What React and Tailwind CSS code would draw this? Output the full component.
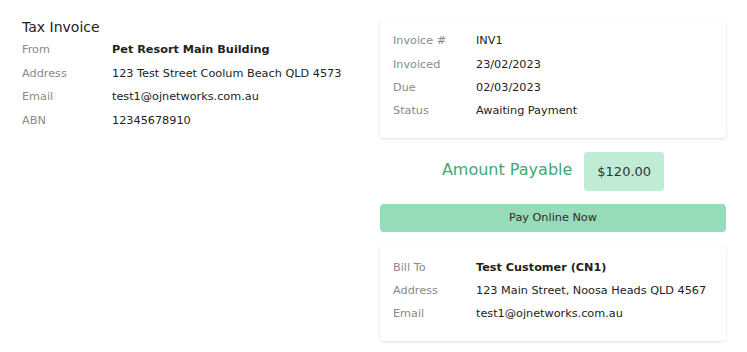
import React from "react";

const font = { fontFamily: '"DejaVu Sans", Verdana, sans-serif' };

function LRow({ label, value, bold }) {
  return (
    <div className="flex h-[23.7px] items-center">
      <div className="w-[90px] shrink-0 text-[#8a8a8a]">{label}</div>
      <div className={`text-[#222] ${bold ? "font-bold" : ""}`}>{value}</div>
    </div>
  );
}

function CRow({ label, value, bold, h = "h-[23.3px]" }) {
  return (
    <div className={`flex ${h} items-center`}>
      <div className="w-[83px] shrink-0 text-[#8a8a8a]">{label}</div>
      <div className={`text-[#222] ${bold ? "font-bold" : ""}`}>{value}</div>
    </div>
  );
}

export default function App() {
  return (
    <div className="w-[747px] h-[352px] bg-white text-[11.25px]" style={font}>
      <div className="grid grid-cols-2 gap-[12px] pl-[22px] pr-[21px] pt-[20px]">
        <div>
          <div className="text-[14px] leading-[14px] text-[#222] mb-[4.5px]">Tax Invoice</div>
          <div className="flex flex-col">
            <LRow label="From" value="Pet Resort Main Building" bold />
            <LRow label="Address" value="123 Test Street Coolum Beach QLD 4573" />
            <LRow label="Email" value="test1@ojnetworks.com.au" />
            <LRow label="ABN" value="12345678910" />
          </div>
        </div>
        <div className="flex flex-col">
          <div className="-mt-px rounded-[4px] bg-white shadow-[0_1px_3px_rgba(0,0,0,0.12)] pl-[13px] pt-[11px] pb-[15px]">
            <CRow label="Invoice #" value="INV1" />
            <CRow label="Invoiced" value="23/02/2023" />
            <CRow label="Due" value="02/03/2023" />
            <CRow label="Status" value="Awaiting Payment" />
          </div>
          <div className="flex items-center justify-center gap-[12px] mt-[14px]">
            <div className="text-[16px] text-[#3bab72] -mt-[3px]">Amount Payable</div>
            <div className="h-[39px] flex items-center px-[13px] rounded-[4px] bg-[#c0ebd5] text-[13px] text-[#2a3a33]">$120.00</div>
          </div>
          <div className="mt-[13px] h-[28px] rounded-[4px] bg-[#96dcb8] flex items-center justify-center text-[#2a2a2a]">
            Pay Online Now
          </div>
          <div className="mt-[14px] rounded-[4px] bg-white shadow-[0_1px_3px_rgba(0,0,0,0.12)] pl-[13px] pt-[11px] pb-[15px]">
            <CRow h="h-[23px]" label="Bill To" value="Test Customer (CN1)" bold />
            <CRow h="h-[23px]" label="Address" value="123 Main Street, Noosa Heads QLD 4567" />
            <CRow h="h-[23px]" label="Email" value="test1@ojnetworks.com.au" />
          </div>
        </div>
      </div>
    </div>
  );
}
